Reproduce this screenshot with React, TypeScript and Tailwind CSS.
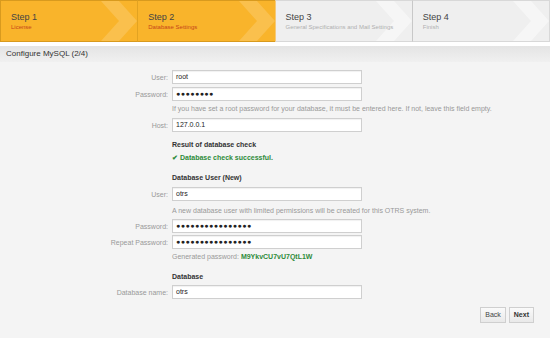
import React from "react";

const steps = [
  { title: "Step 1", sub: "License", active: true },
  { title: "Step 2", sub: "Database Settings", active: true },
  { title: "Step 3", sub: "General Specifications and Mail Settings", active: false },
  { title: "Step 4", sub: "Finish", active: false },
];

const Chevron: React.FC<{ active: boolean }> = ({ active }) => (
  <svg
    className="absolute right-0 top-0 h-full w-[40px]"
    viewBox="0 0 40 42"
    preserveAspectRatio="none"
  >
    <polygon
      points="4,0 22,0 40,21 22,42 4,42 22,21"
      fill="#ffffff"
      opacity={active ? 0.16 : 0.45}
    />
  </svg>
);

const Row: React.FC<{ label: string; value: string; className?: string; bold?: boolean }> = ({
  label,
  value,
  className = "",
  bold,
}) => (
  <div className={`flex items-center ${className}`}>
    <div className="w-[172px] pr-[4px] text-right text-[7px] leading-[9px] text-[#999]">{label}:</div>
    <div
      className={`flex h-[14px] w-[190px] items-center border border-[#cfcfcf] bg-white pl-[3px] text-[7px] text-[#222] shadow-[inset_0_1px_1px_rgba(0,0,0,0.06)] ${
        bold ? "font-bold tracking-[0.5px]" : ""
      }`}
    >
      {value}
    </div>
  </div>
);

const Note: React.FC<{ children: React.ReactNode; className?: string }> = ({ children, className = "" }) => (
  <div className={`pl-[172px] text-[7px] leading-[9px] text-[#999] ${className}`}>{children}</div>
);

const Heading: React.FC<{ children: React.ReactNode; className?: string }> = ({ children, className = "" }) => (
  <div className={`pl-[172px] text-[7px] font-bold leading-[9px] text-[#333] ${className}`}>{children}</div>
);

const App: React.FC = () => {
  return (
    <div className="h-[338px] w-[550px] overflow-hidden bg-white font-['Liberation_Sans',Arial,sans-serif]">
      <div className="flex h-[42px]">
        {steps.map((s, i) => (
          <div
            key={s.title}
            className={`relative flex-1 overflow-hidden border-y pl-[10px] pt-[11px] ${
              s.active
                ? "border-[#d89a1e] bg-[#f9b42b]"
                : "border-[#d8d8d8] bg-[#efefef]"
            } ${i === 0 ? "border-l" : ""} ${i === 3 ? "border-r" : ""} ${
              i === 1 ? "border-l border-l-[#e2a322]" : ""
            } ${i === 3 ? "border-l border-l-[#c8c8c8]" : ""} ${
              i === 2 ? "border-l border-l-[#f5c97a]" : ""
            }`}
          >
            <Chevron active={s.active} />
            <div className="relative text-[9px] leading-[11px] text-[#444]">{s.title}</div>
            <div
              className={`relative text-[6px] leading-[9px] ${
                s.active ? "text-[#c8461a]" : "text-[#b0b0b0]"
              }`}
            >
              {s.sub}
            </div>
          </div>
        ))}
      </div>

      <div className="mt-[4px] bg-[#f4f4f4]">
        <div className="flex h-[16px] items-center bg-gradient-to-b from-[#e4e4e4] to-[#f0f0f0] pl-[6px] text-[8px] text-[#333]">
          Configure MySQL (2/4)
        </div>

        <div className="h-[276px] pt-[8px]">
          <Row label="User" value="root" />
          <Row label="Password" value="●●●●●●●●" className="mt-[3px]" bold />
          <Note className="mt-[3px]">
            If you have set a root password for your database, it must be entered here. If not, leave this field empty.
          </Note>
          <Row label="Host" value="127.0.0.1" className="mt-[5px]" />

          <Heading className="mt-[8px]">Result of database check</Heading>
          <div className="mt-[4px] flex items-center pl-[172px] text-[7px] font-bold leading-[9px] text-[#2e8b3a]">
            <span className="mr-[2px]">✔</span>Database check successful.
          </div>

          <Heading className="mt-[11px]">Database User (New)</Heading>
          <Row label="User" value="otrs" className="mt-[5px]" />
          <Note className="mt-[5px]">
            A new database user with limited permissions will be created for this OTRS system.
          </Note>
          <Row label="Password" value="●●●●●●●●●●●●●●●●" className="mt-[4px]" bold />
          <Row label="Repeat Password" value="●●●●●●●●●●●●●●●●" className="mt-[2px]" bold />
          <Note className="mt-[3px]">
            Generated password: <span className="font-bold text-[#2e8b3a]">M9YkvCU7vU7QtL1W</span>
          </Note>

          <Heading className="mt-[11px]">Database</Heading>
          <Row label="Database name" value="otrs" className="mt-[4px]" />

          <div className="mt-[8px] flex justify-end gap-[3px] pr-[16px]">
            <button className="h-[16px] border border-[#cfcfcf] bg-gradient-to-b from-[#fafafa] to-[#e9e9e9] px-[4px] text-[7px] text-[#444]">
              Back
            </button>
            <button className="h-[16px] border border-[#cfcfcf] bg-gradient-to-b from-[#fafafa] to-[#e9e9e9] px-[4px] text-[7px] font-bold text-[#333]">
              Next
            </button>
          </div>
        </div>
      </div>
    </div>
  );
};

export default App;
